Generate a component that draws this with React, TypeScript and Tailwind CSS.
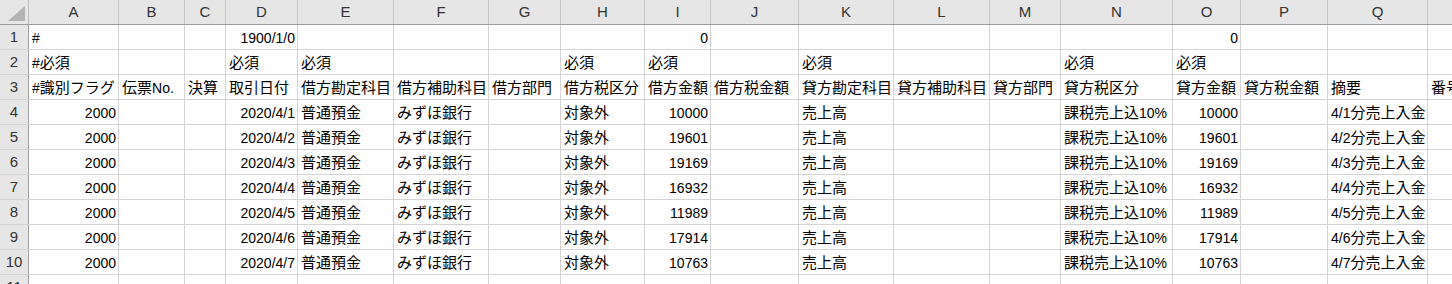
const columns = [
  { key: "A", w: "w-[90px]" },
  { key: "B", w: "w-[66px]" },
  { key: "C", w: "w-[41px]" },
  { key: "D", w: "w-[72px]" },
  { key: "E", w: "w-[96px]" },
  { key: "F", w: "w-[95px]" },
  { key: "G", w: "w-[72px]" },
  { key: "H", w: "w-[84px]" },
  { key: "I", w: "w-[66px]" },
  { key: "J", w: "w-[88px]" },
  { key: "K", w: "w-[95px]" },
  { key: "L", w: "w-[96px]" },
  { key: "M", w: "w-[71px]" },
  { key: "N", w: "w-[112px]" },
  { key: "O", w: "w-[68px]" },
  { key: "P", w: "w-[87px]" },
  { key: "Q", w: "w-[100px]" },
  { key: "R", w: "w-[100px]" },
];

type Cell = { v: string; right?: boolean };
type Row = Record<string, Cell>;

const amounts = [10000, 19601, 19169, 16932, 11989, 17914, 10763];

const rows: Row[] = [
  {
    A: { v: "#" },
    D: { v: "1900/1/0", right: true },
    I: { v: "0", right: true },
    O: { v: "0", right: true },
  },
  {
    A: { v: "#必須" },
    D: { v: "必須" },
    E: { v: "必須" },
    H: { v: "必須" },
    I: { v: "必須" },
    K: { v: "必須" },
    N: { v: "必須" },
    O: { v: "必須" },
  },
  {
    A: { v: "#識別フラグ" },
    B: { v: "伝票No." },
    C: { v: "決算" },
    D: { v: "取引日付" },
    E: { v: "借方勘定科目" },
    F: { v: "借方補助科目" },
    G: { v: "借方部門" },
    H: { v: "借方税区分" },
    I: { v: "借方金額" },
    J: { v: "借方税金額" },
    K: { v: "貸方勘定科目" },
    L: { v: "貸方補助科目" },
    M: { v: "貸方部門" },
    N: { v: "貸方税区分" },
    O: { v: "貸方金額" },
    P: { v: "貸方税金額" },
    Q: { v: "摘要" },
    R: { v: "番号" },
  },
  ...amounts.map((amt, i) => ({
    A: { v: "2000", right: true },
    D: { v: `2020/4/${i + 1}`, right: true },
    E: { v: "普通預金" },
    F: { v: "みずほ銀行" },
    H: { v: "対象外" },
    I: { v: String(amt), right: true },
    K: { v: "売上高" },
    N: { v: "課税売上込10%" },
    O: { v: String(amt), right: true },
    Q: { v: `4/${i + 1}分売上入金` },
  })),
  {},
];

// ascii runs get the latin size, everything else the CJK size
function Runs({ text }: { text: string }) {
  const parts = text.match(/[\x00-\x7f]+|[^\x00-\x7f]+/g) ?? [];
  return (
    <>
      {parts.map((p, i) =>
        /^[\x00-\x7f]+$/.test(p) ? (
          <span key={i} className="text-[14px]">
            {p}
          </span>
        ) : (
          <span key={i}>{p}</span>
        )
      )}
    </>
  );
}

export default function App() {
  return (
    <div className="w-[1452px] h-[284px] overflow-hidden bg-white font-['Liberation_Sans','Noto_Sans_CJK_JP',sans-serif] text-[15px] text-black">
      {/* Column headers */}
      <div className="flex h-[25px] bg-[#e6e6e6] border-b border-[#9e9e9e] box-border">
        <div className="relative w-[29px] shrink-0 border-r border-[#bdbdbd]">
          <div className="absolute right-[3px] bottom-[3px] w-0 h-0 border-l-[17px] border-l-transparent border-b-[15px] border-b-[#b4b4b4]" />
        </div>
        {columns.map((c) => (
          <div
            key={c.key}
            className={`${c.w} shrink-0 border-r border-[#c6c6c6] flex items-center justify-center text-[#333] text-[15px] pt-[1px]`}
          >
            {c.key}
          </div>
        ))}
      </div>

      {/* Rows */}
      {rows.map((row, ri) => (
        <div key={ri} className="flex h-[25px] border-b border-[#d4d4d4] box-border">
          <div className="w-[29px] shrink-0 bg-[#e6e6e6] border-r border-[#9e9e9e] flex items-center justify-center text-[#333] text-[15px] pt-[1px]">
            {ri + 1}
          </div>
          {columns.map((c) => {
            const cell = row[c.key];
            return (
              <div
                key={c.key}
                className={`${c.w} shrink-0 border-r border-[#d4d4d4] flex items-center whitespace-nowrap overflow-hidden pt-[2px] ${
                  cell?.right ? "justify-end pr-[2px]" : "justify-start pl-[3px]"
                }`}
              >
                {cell ? <Runs text={cell.v} /> : null}
              </div>
            );
          })}
        </div>
      ))}
    </div>
  );
}
